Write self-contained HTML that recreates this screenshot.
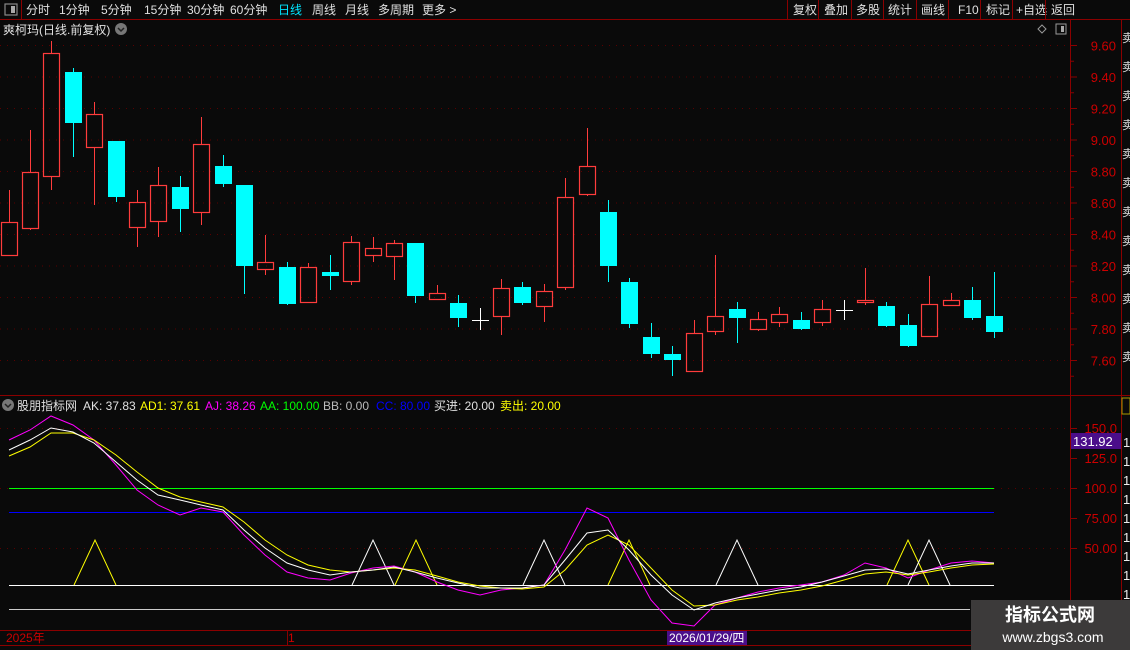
<!DOCTYPE html>
<html><head><meta charset="utf-8"><style>
body{margin:0;background:#0a0a0a;width:1130px;height:650px;overflow:hidden;font-family:"Liberation Sans","Noto Sans CJK SC",sans-serif}
svg{position:absolute;left:0;top:0}
</style></head><body>
<svg id="s" width="1130" height="650" xmlns="http://www.w3.org/2000/svg" font-family="Liberation Sans, Noto Sans CJK SC, sans-serif">
<rect width="1130" height="650" fill="#0a0a0a"/>
<line x1="0" y1="19.5" x2="1130" y2="19.5" stroke="#8b0000"/>
<line x1="21.5" y1="0" x2="21.5" y2="19" stroke="#8b0000"/>
<rect x="5" y="4" width="12" height="11" fill="none" stroke="#888" stroke-width="1.2"/><rect x="11" y="6" width="4" height="7" fill="#aaa"/>
<g font-size="12" fill="#e0e0e0">
<text x="26" y="14">分时</text><text x="59" y="14">1分钟</text><text x="101" y="14">5分钟</text><text x="144" y="14">15分钟</text><text x="187" y="14">30分钟</text><text x="230" y="14">60分钟</text>
<text x="278" y="14" fill="#00e5ff">日线</text><text x="312" y="14">周线</text><text x="345" y="14">月线</text><text x="378" y="14">多周期</text><text x="422" y="14">更多 &gt;</text>
<text x="793" y="14">复权</text><text x="824" y="14">叠加</text><text x="856" y="14">多股</text><text x="888" y="14">统计</text><text x="921" y="14">画线</text><text x="958" y="14">F10</text><text x="986" y="14">标记</text><text x="1016" y="14">+自选</text><text x="1051" y="14">返回</text>
</g>
<g stroke="#8b0000"><line x1="787.5" y1="0" x2="787.5" y2="19"/><line x1="818.5" y1="0" x2="818.5" y2="19"/><line x1="851.5" y1="0" x2="851.5" y2="19"/><line x1="883.5" y1="0" x2="883.5" y2="19"/><line x1="916.5" y1="0" x2="916.5" y2="19"/><line x1="948.5" y1="0" x2="948.5" y2="19"/><line x1="980.5" y1="0" x2="980.5" y2="19"/><line x1="1012.5" y1="0" x2="1012.5" y2="19"/><line x1="1045.5" y1="0" x2="1045.5" y2="19"/></g>
<text x="3" y="34" font-size="12" fill="#e0e0e0">爽柯玛(日线.前复权)</text>
<circle cx="121" cy="29" r="6" fill="#777"/><path d="M118 28 l3 3 l3 -3" stroke="#222" fill="none" stroke-width="1.5"/>
<path d="M1042 25 l4 4 l-4 4 l-4 -4z" fill="none" stroke="#999"/>
<rect x="1056" y="24" width="10" height="10" fill="none" stroke="#999"/><rect x="1061" y="26" width="3" height="6" fill="#aaa"/>
<line x1="1070.5" y1="20" x2="1070.5" y2="630" stroke="#8b0000"/>
<line x1="1121.5" y1="20" x2="1121.5" y2="630" stroke="#8b0000"/>
<line x1="0" y1="395.5" x2="1130" y2="395.5" stroke="#8b0000"/>
<line x1="0" y1="630.5" x2="1130" y2="630.5" stroke="#8b0000"/>
<line x1="0" y1="645.5" x2="1130" y2="645.5" stroke="#8b0000"/>
<g id="g"></g>
<circle cx="8" cy="405" r="6" fill="#777"/><path d="M5 404 l3 3 l3 -3" stroke="#222" fill="none" stroke-width="1.5"/>
<g font-size="12"><text x="17" y="410" fill="#e0e0e0">股朋指标网</text><text x="83" y="410" fill="#e0e0e0">AK: 37.83</text><text x="140" y="410" fill="#ffff00">AD1: 37.61</text><text x="205" y="410" fill="#ff00ff">AJ: 38.26</text><text x="260" y="410" fill="#00ff00">AA: 100.00</text><text x="323" y="410" fill="#bbbbbb">BB: 0.00</text><text x="376" y="410" fill="#0000ff">CC: 80.00</text><text x="434" y="410" fill="#e0e0e0">买进: 20.00</text><text x="500" y="410" fill="#ffff00">卖出: 20.00</text></g>
<text x="6" y="642" font-size="12" fill="#cc0000">2025年</text>
<line x1="287.5" y1="631" x2="287.5" y2="645" stroke="#8b0000"/><text x="288" y="642" font-size="12" fill="#cc0000">1</text>
<rect x="667" y="631" width="80" height="14" fill="#4b0e8a"/><text x="669" y="642" font-size="12" fill="#fff">2026/01/29/四</text>
<rect x="971" y="600" width="159" height="50" fill="#3c3a3a"/>
<text x="1050" y="621" font-size="18" font-weight="bold" fill="#fff" text-anchor="middle">指标公式网</text>
<text x="1053" y="642" font-size="14" fill="#fff" text-anchor="middle">www.zbgs3.com</text>
</svg>
<script>
var g=document.getElementById('g'),h='';
function L(x1,y1,x2,y2,c,w,d){h+='<line x1="'+x1+'" y1="'+y1+'" x2="'+x2+'" y2="'+y2+'" stroke="'+c+'" stroke-width="'+(w||1)+'"'+(d?' stroke-dasharray="'+d+'"':'')+'/>';}
var pl=['9.60','9.40','9.20','9.00','8.80','8.60','8.40','8.20','8.00','7.80','7.60'];
for(var i=0;i<11;i++){var y=45.5+i*31.5;L(0,y,1068,y,'#5a0000',1,'1 6');L(1070,y,1077,y,'#8b0000');h+='<text x="1116" y="'+(y+5)+'" font-size="13" fill="#cc0000" text-anchor="end">'+pl[i]+'</text>';L(1070,y+15.75,1074,y+15.75,'#8b0000');}
for(var i=0;i<12;i++){h+='<text x="1122" y="'+(42+i*29)+'" font-size="12" fill="#ddd">卖</text>';}
h+='<rect x="1122" y="398" width="8" height="16" fill="#0a0a0a" stroke="#aa9900"/>';
for(var i=0;i<9;i++){h+='<text x="1123" y="'+(447+i*19)+'" font-size="13" fill="#eee">1</text>';}
var C=[[9,222,255,190,256,'r'],[30,172,228,130,230,'r'],[51,53,176,41,190,'r'],[73,72,123,68,157,'c'],[94,114,147,102,205,'r'],[116,141,197,141,202,'c'],[137,202,227,190,247,'r'],[158,185,221,167,237,'r'],[180,187,209,176,232,'c'],[201,144,212,117,225,'r'],[223,166,184,155,187,'c'],[244,185,266,185,294,'c'],[265,262,269,235,275,'r'],[287,267,304,262,305,'c'],[308,267,302,263,303,'r'],[330,272,276,255,290,'c'],[351,242,281,236,285,'r'],[373,248,255,237,262,'r'],[394,243,256,240,280,'r'],[415,243,296,243,303,'c'],[437,293,299,285,300,'r'],[458,303,318,295,327,'c'],[480,320,320,308,330,'w'],[501,288,316,279,335,'r'],[522,287,303,282,305,'c'],[544,291,306,284,322,'r'],[565,197,287,178,290,'r'],[587,166,194,128,196,'r'],[608,212,266,200,282,'c'],[629,282,324,278,328,'c'],[651,337,354,323,358,'c'],[672,354,360,346,376,'c'],[694,333,371,320,372,'r'],[715,316,331,255,335,'r'],[737,309,318,302,343,'c'],[758,319,329,312,331,'r'],[779,314,322,307,327,'r'],[801,320,329,312,330,'c'],[822,309,322,300,326,'r'],[844,310,310,300,320,'w'],[865,300,302,268,305,'r'],[886,306,326,302,327,'c'],[908,325,346,314,347,'c'],[929,304,336,276,337,'r'],[951,300,305,293,306,'r'],[972,300,318,287,320,'c'],[994,316,332,272,338,'c']];
C.forEach(function(c){var x=c[0]+0.5;if(c[5]=='c'){L(x,c[3],x,c[4],'#00ffff');h+='<rect x="'+(c[0]-8)+'" y="'+c[1]+'" width="17" height="'+Math.max(c[2]-c[1],2)+'" fill="#00ffff"/>';}
else if(c[5]=='w'){L(x,c[3],x,c[4],'#fff');L(c[0]-8,c[1]+0.5,c[0]+9,c[1]+0.5,'#fff');}
else{L(x,c[3],x,c[1],'#ff3c3c');L(x,c[2],x,c[4],'#ff3c3c');h+='<rect x="'+(c[0]-7.5)+'" y="'+(c[1]+0.5)+'" width="16" height="'+Math.max(c[2]-c[1],1)+'" fill="none" stroke="#ff3c3c" stroke-width="1.2"/>';}});
var il=[[428,'150.0'],[458,'125.0'],[488,'100.0'],[518,'75.00'],[548,'50.00']];
il.forEach(function(a){if(a[0]!=458&&a[0]!=518)L(0,a[0]+0.5,1068,a[0]+0.5,'#5a0000',1,'1 6');L(1070,a[0]+0.5,1077,a[0]+0.5,'#8b0000');h+='<text x="1117" y="'+(a[0]+5)+'" font-size="13" fill="#cc0000" text-anchor="end">'+a[1]+'</text>';});
h+='<rect x="1071" y="433" width="50" height="16" fill="#4b0e8a"/><text x="1073" y="446" font-size="13" fill="#fff">131.92</text>';
L(9,488.5,994,488.5,'#00ff00');L(9,512.5,994,512.5,'#0000ff');L(9,585.5,994,585.5,'#fff');L(9,609.5,970,609.5,'#ccc');
[[95,'#ffff00'],[373,'#fff'],[416,'#ffff00'],[544,'#fff'],[629,'#ffff00'],[737,'#fff'],[908,'#ffff00'],[929,'#fff']].forEach(function(t){h+='<polyline points="'+(t[0]-21)+',585 '+t[0]+',540 '+(t[0]+21)+',585" fill="none" stroke="'+t[1]+'"/>';});
var X=C.map(function(c){return c[0]});
var M=[440,430,416,425,440,465,490,505,515,508,512,535,555,572,578,580,573,568,566,572,582,590,595,590,588,585,550,508,518,560,600,623,626,605,598,592,588,585,582,575,563,568,578,570,563,561,563];
var W=[450,440,428,432,443,462,480,495,500,505,510,530,548,563,570,575,572,570,567,572,578,583,588,588,588,585,560,533,530,550,575,595,610,603,598,594,590,587,582,576,570,569,574,570,566,563,563];
var Y=[456,447,433,433,440,455,472,488,497,502,507,522,540,555,565,570,572,570,568,570,576,582,586,588,589,587,570,545,535,545,568,590,606,605,600,597,593,590,586,580,574,572,575,572,568,565,564];
function P(a,c){h+='<polyline points="'+a.map(function(v,i){return X[i]+','+v}).join(' ')+'" fill="none" stroke="'+c+'"/>';}
P(M,'#ff00ff');P(Y,'#ffff00');P(W,'#fff');
g.innerHTML=h;
</script>
</body></html>
